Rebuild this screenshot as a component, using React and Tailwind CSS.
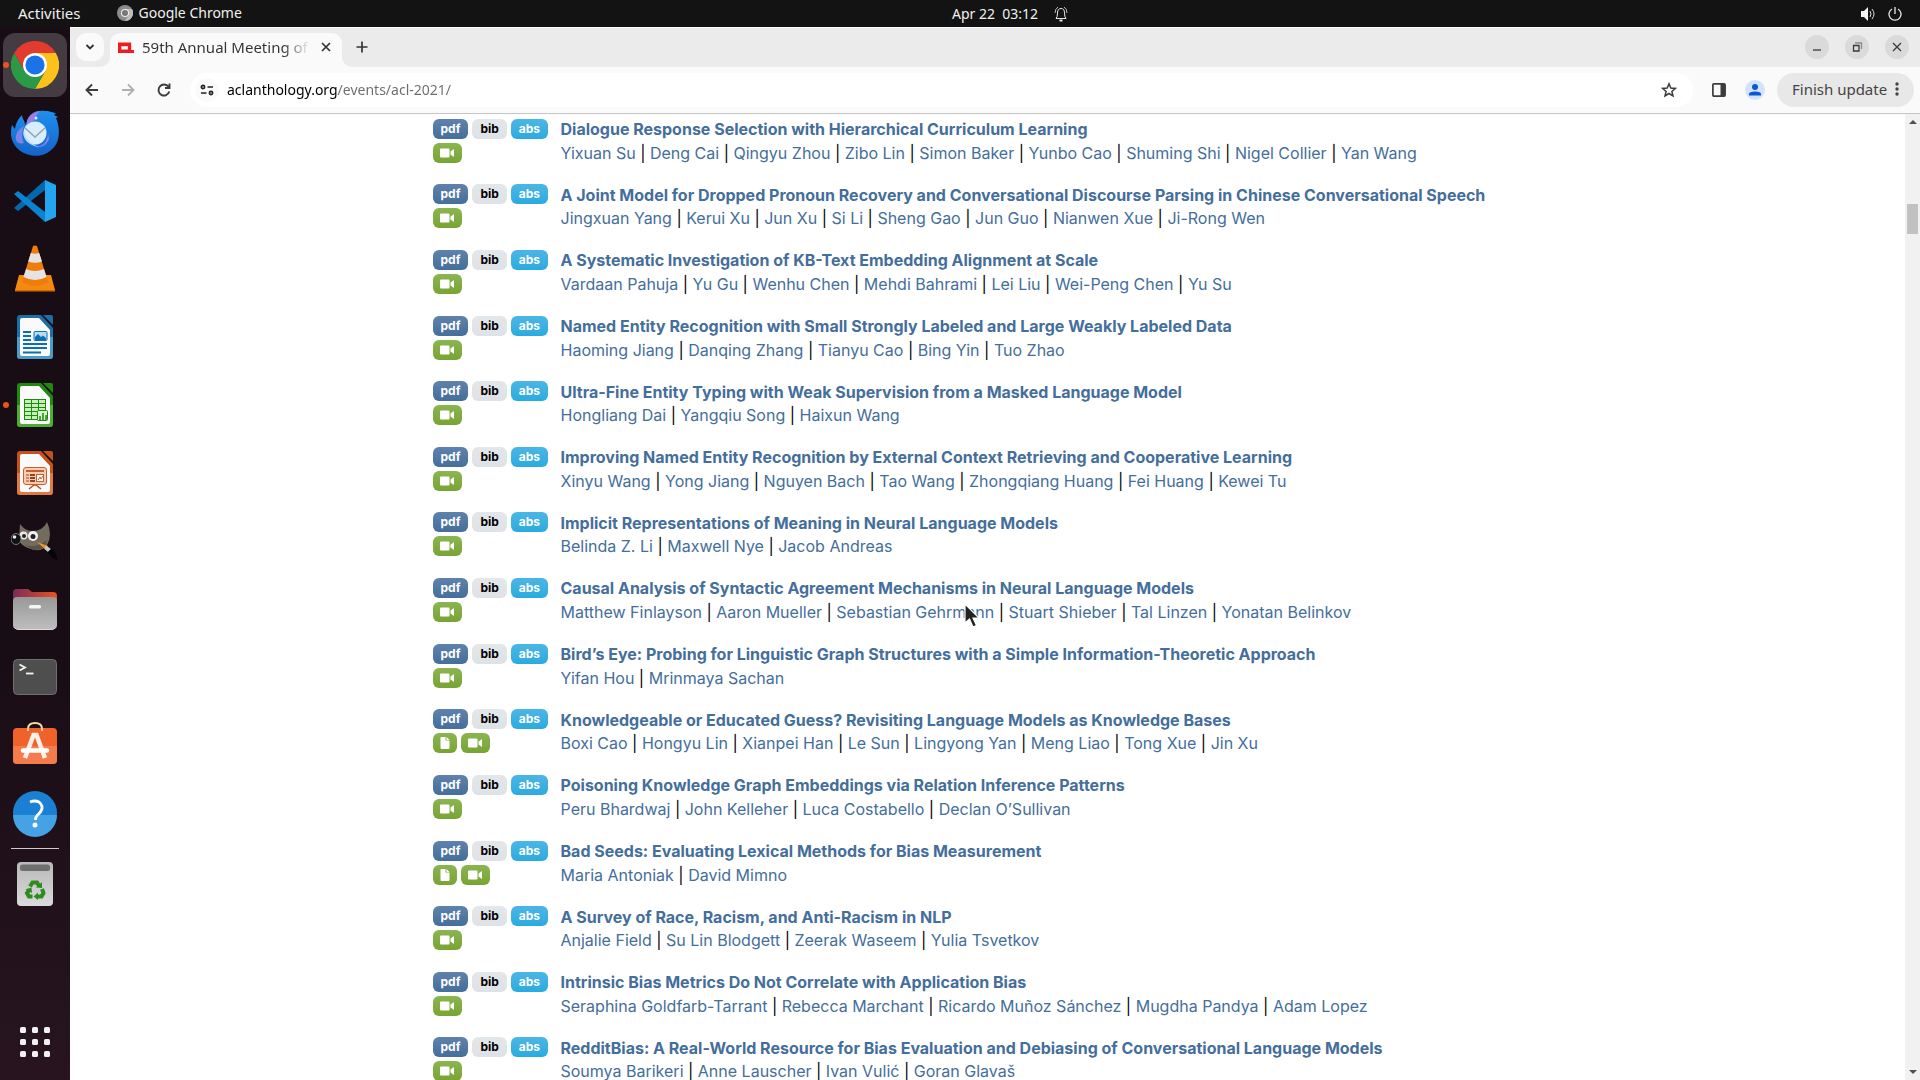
import React from "react";

const papers = [
  {
    title: "Dialogue Response Selection with Hierarchical Curriculum Learning",
    authors: ["Yixuan Su", "Deng Cai", "Qingyu Zhou", "Zibo Lin", "Simon Baker", "Yunbo Cao", "Shuming Shi", "Nigel Collier", "Yan Wang"],
  },
  {
    title: "A Joint Model for Dropped Pronoun Recovery and Conversational Discourse Parsing in Chinese Conversational Speech",
    authors: ["Jingxuan Yang", "Kerui Xu", "Jun Xu", "Si Li", "Sheng Gao", "Jun Guo", "Nianwen Xue", "Ji-Rong Wen"],
  },
  {
    title: "A Systematic Investigation of KB-Text Embedding Alignment at Scale",
    authors: ["Vardaan Pahuja", "Yu Gu", "Wenhu Chen", "Mehdi Bahrami", "Lei Liu", "Wei-Peng Chen", "Yu Su"],
  },
  {
    title: "Named Entity Recognition with Small Strongly Labeled and Large Weakly Labeled Data",
    authors: ["Haoming Jiang", "Danqing Zhang", "Tianyu Cao", "Bing Yin", "Tuo Zhao"],
  },
  {
    title: "Ultra-Fine Entity Typing with Weak Supervision from a Masked Language Model",
    authors: ["Hongliang Dai", "Yangqiu Song", "Haixun Wang"],
  },
  {
    title: "Improving Named Entity Recognition by External Context Retrieving and Cooperative Learning",
    authors: ["Xinyu Wang", "Yong Jiang", "Nguyen Bach", "Tao Wang", "Zhongqiang Huang", "Fei Huang", "Kewei Tu"],
  },
  {
    title: "Implicit Representations of Meaning in Neural Language Models",
    authors: ["Belinda Z. Li", "Maxwell Nye", "Jacob Andreas"],
  },
  {
    title: "Causal Analysis of Syntactic Agreement Mechanisms in Neural Language Models",
    authors: ["Matthew Finlayson", "Aaron Mueller", "Sebastian Gehrmann", "Stuart Shieber", "Tal Linzen", "Yonatan Belinkov"],
  },
  {
    title: "Bird’s Eye: Probing for Linguistic Graph Structures with a Simple Information-Theoretic Approach",
    authors: ["Yifan Hou", "Mrinmaya Sachan"],
  },
  {
    title: "Knowledgeable or Educated Guess? Revisiting Language Models as Knowledge Bases",
    authors: ["Boxi Cao", "Hongyu Lin", "Xianpei Han", "Le Sun", "Lingyong Yan", "Meng Liao", "Tong Xue", "Jin Xu"],
    attachment: true,
  },
  {
    title: "Poisoning Knowledge Graph Embeddings via Relation Inference Patterns",
    authors: ["Peru Bhardwaj", "John Kelleher", "Luca Costabello", "Declan O’Sullivan"],
  },
  {
    title: "Bad Seeds: Evaluating Lexical Methods for Bias Measurement",
    authors: ["Maria Antoniak", "David Mimno"],
    attachment: true,
  },
  {
    title: "A Survey of Race, Racism, and Anti-Racism in NLP",
    authors: ["Anjalie Field", "Su Lin Blodgett", "Zeerak Waseem", "Yulia Tsvetkov"],
  },
  {
    title: "Intrinsic Bias Metrics Do Not Correlate with Application Bias",
    authors: ["Seraphina Goldfarb-Tarrant", "Rebecca Marchant", "Ricardo Muñoz Sánchez", "Mugdha Pandya", "Adam Lopez"],
  },
  {
    title: "RedditBias: A Real-World Resource for Bias Evaluation and Debiasing of Conversational Language Models",
    authors: ["Soumya Barikeri", "Anne Lauscher", "Ivan Vulić", "Goran Glavaš"],
  },
];

const ChromeIcon = () => (
  <svg viewBox="0 0 48 48" className="size-12">
    <path d="M24 12 H44.8 A24 24 0 0 1 24 48 L34.4 30 Z" fill="#fcc21b" />
    <path d="M34.4 30 L24 48 A24 24 0 0 1 3.2 12 L13.6 30 Z" fill="#2b9a47" />
    <path d="M13.6 30 L3.2 12 A24 24 0 0 1 44.8 12 H24 Z" fill="#e33b2e" />
    <circle cx="24" cy="24" r="12" fill="#fff" />
    <circle cx="24" cy="24" r="9.6" fill="#1a73e8" />
  </svg>
);

const ThunderbirdIcon = () => (
  <svg viewBox="0 0 48 48" className="size-12">
    <defs>
      <linearGradient id="tb" x1="0" y1="0" x2="0" y2="1">
        <stop offset="0" stopColor="#1f8ff0" />
        <stop offset="1" stopColor="#1463c9" />
      </linearGradient>
    </defs>
    <path d="M16 12 C18 4 26 1 34 2 C40 2 42 4 45 4 L43 6 L47 8 L45 9 C49 18 49 30 44 37 C38 45 29 48 21 46.500 C9 45 1 36 0 26 C0 22 0 20 1 16 L4 20 C5 13 8 9 11 6 C11 10 14 11 14 16 Z" fill="url(#tb)" />
    <path d="M5 31 C4 24 8 20 13 17 C11 22 10 28 13 34 C9 35 6 34 5 31Z" fill="#7f83e8" />
    <path d="M16 12 C18 7 22 3 29 2 C26 5 24 8 24 11 L16 15Z" fill="#9b7bea" />
    <path d="M38 30 C36 36 30 39 25 38 C34 37 37 30 37 24Z" fill="#8b83ea" />
    <circle cx="24" cy="24" r="11.500" fill="#d9edfc" />
    <path d="M13 22 C14 28 18 34 28 38 C20 37 13 32 12.500 25Z" fill="#b9dcf8" />
    <path d="M14 19 L24 28 L34 19" fill="none" stroke="#8fa6bd" strokeWidth="1.500" />
    <circle cx="25" cy="9" r="1.500" fill="#d8f0ff" />
  </svg>
);

const VsCodeIcon = () => (
  <svg viewBox="0 0 48 48" className="size-12">
    <path d="M3 31 L7 34 L34 13 V3 Z" fill="#0468ae" />
    <path d="M3 17 L7 14 L34 35 V45 Z" fill="#0b84d0" />
    <path d="M34 3 L45 8 V40 L34 45 Z" fill="#25a5f0" />
  </svg>
);

const VlcIcon = () => (
  <svg viewBox="0 0 48 48" className="size-12">
    <path d="M8 30 H40 L44 45 H4 Z" fill="#f58a10" />
    <path d="M4 45 H44 V46.500 H4Z" fill="#d46a00" />
    <path d="M22 1 Q24 0 26 1 L37 37 Q24 45 11 37 Z" fill="#f07c0c" />
    <path d="M19.800 8 Q24 9.500 28.200 8 L31 16.500 Q24 19 17.200 16.500 Z" fill="#e4e4e4" />
    <path d="M15 24 Q24 28 33 24 L35.500 32 Q24 38 12.500 32 Z" fill="#e4e4e4" />
  </svg>
);

const OfficeIcon = ({ dark, light, children }) => (
  <svg viewBox="0 0 48 48" className="size-12">
    <path d="M9 2 H30 L42 15 V43 Q42 46 39 46 H9 Q6 46 6 43 V5 Q6 2 9 2Z" fill={dark} />
    <path d="M6 24 H42 V43 Q42 46 39 46 H9 Q6 46 6 43Z" fill={light} />
    <path d="M11 5 H28 L39 17 V41 Q39 43 37 43 H11 Q9 43 9 41 V7 Q9 5 11 5Z" fill="#fafafa" />
    <path d="M32 2 H40 Q42 2 42 4 V12 Z" fill={dark} />
    {children}
  </svg>
);

const WriterIcon = () => (
  <OfficeIcon dark="#1c6ea6" light="#4a9ccb">
    <path d="M12 19 H20 M12 23 H20 M12 27 H20 M12 31 H36 M12 35 H36 M12 39.500 H30" stroke="#0b6fb5" strokeWidth="2" />
    <rect x="23" y="18.500" width="13" height="9" rx="1" fill="#b9dcf2" stroke="#0b6fb5" />
    <path d="M24 27 V24 L27 21 L30 24 L32 22.500 L35 25 V27Z" fill="#0b6fb5" />
  </OfficeIcon>
);

const CalcIcon = () => (
  <OfficeIcon dark="#218a0e" light="#4eae32">
    <rect x="13.500" y="18.500" width="21" height="20" fill="#c9efb9" stroke="#1c8a0c" />
    <path d="M13 22.500 H35 M13 26.500 H35 M13 30.500 H35 M13 34.500 H35 M20.500 18 V39 M27.500 18 V39" stroke="#1c8a0c" />
    <rect x="26.500" y="29.500" width="10" height="10" rx="1" fill="#d7f5ca" stroke="#1c8a0c" />
    <path d="M29 39 V35 M32 39 V32 M35 39 V34" stroke="#1c8a0c" strokeWidth="1.500" />
  </OfficeIcon>
);

const ImpressIcon = () => (
  <OfficeIcon dark="#c4521a" light="#e07a41">
    <path d="M18 40 L23 36 H25 L30 40" fill="none" stroke="#b8501c" strokeWidth="1.500" />
    <rect x="12.500" y="18.500" width="23" height="17" rx="2.500" fill="#f6cdb4" stroke="#c4622e" />
    <path d="M15 22 H33" stroke="#c4622e" strokeWidth="2" />
    <path d="M15 26 H18 M15 29 H18 M15 32 H18" stroke="#d98858" strokeWidth="2" />
    <path d="M19 26 H24 M19 29 H24 M19 32 H24" stroke="#99411a" strokeWidth="2" />
    <rect x="25.500" y="25.500" width="7" height="7" fill="#fff" stroke="#c4622e" />
    <path d="M27 31 L29 28 L30 30 L32 27" fill="none" stroke="#c4622e" />
  </OfficeIcon>
);

const GimpIcon = () => (
  <svg viewBox="0 -4 48 48" className="size-12">
    <path d="M9 3 Q14 10 21 10 Q32 10 36 1 Q42 14 36 24 Q30 32 20 28 Q12 26 8 20 Z" fill="#736c5e" />
    <path d="M14 24 Q25 28 36 19 L34 25 Q28 31 20 28Z" fill="#5a5448" />
    <circle cx="12.500" cy="14.500" r="4" fill="#e8e8e8" />
    <circle cx="22" cy="15" r="5" fill="#f2f2f2" />
    <circle cx="13" cy="15" r="2" fill="#222" />
    <circle cx="22" cy="15.500" r="2.500" fill="#222" />
    <ellipse cx="5" cy="18" rx="5" ry="5.500" fill="#111" stroke="#6d7a80" />
    <circle cx="3.500" cy="16" r="1.800" fill="#eee" />
    <path d="M26 21 L37 25 L35 29 Z" fill="#f0962a" />
    <path d="M35 24.500 L40 28 L37 31 L33.500 28Z" fill="#c9c9c9" />
    <path d="M40 28 Q46 31 46.500 39 Q39 36 37 31Z" fill="#050505" />
  </svg>
);

const FilesIcon = () => (
  <svg viewBox="0 0 48 48" className="size-12">
    <defs>
      <linearGradient id="folderBack">
        <stop offset="0" stopColor="#7c2a5c" />
        <stop offset="1" stopColor="#e9541f" />
      </linearGradient>
      <linearGradient id="folderFront" x1="0" y1="0" x2="0" y2="1">
        <stop offset="0" stopColor="#989898" />
        <stop offset="1" stopColor="#bdbdbd" />
      </linearGradient>
    </defs>
    <path d="M2 8 Q2 4 6 4 H17 L21 7 H42 Q46 7 46 11 V24 H2Z" fill="url(#folderBack)" />
    <rect x="2" y="12" width="44" height="32" rx="4" fill="url(#folderFront)" />
    <path d="M4 43 Q5 44.500 7 44.500 H41 Q43 44.500 44 43" fill="none" stroke="#dadada" />
    <rect x="18" y="20" width="12" height="3.500" rx="1.500" fill="#f5f5f5" />
  </svg>
);

const TerminalIcon = () => (
  <svg viewBox="0 0 48 48" className="size-12">
    <rect x="2.500" y="6.500" width="43" height="35" rx="4" fill="#4e4e4e" stroke="#707070" />
    <path d="M8.500 11.500 L14 14.500 L8.500 17.500" fill="none" stroke="#f4f4f4" strokeWidth="1.800" />
    <path d="M15 20.500 H22.500" stroke="#f4f4f4" strokeWidth="1.800" />
  </svg>
);

const SoftwareIcon = () => (
  <svg viewBox="0 0 48 48" className="size-12">
    <rect x="2" y="7" width="44" height="36" rx="4" fill="#f1622a" />
    <path d="M2 25 H46 V39 Q46 43 42 43 H6 Q2 43 2 39Z" fill="#f47b4c" />
    <path d="M17 10 V8 Q17 2 24 2 Q31 2 31 8 V10" fill="none" stroke="#f7d9a9" strokeWidth="2" />
    <path d="M14 37 L22.500 14 H25.500 L34 37" fill="none" stroke="#fdf0e8" strokeWidth="4.500" />
    <path d="M12 29.500 H36" stroke="#fff" strokeWidth="4.500" strokeLinecap="round" />
  </svg>
);

const HelpIcon = () => (
  <svg viewBox="0 0 48 48" className="size-12">
    <circle cx="24" cy="24" r="22" fill="#1b7fd3" />
    <path d="M2 26 H46 A22 22 0 0 1 2 26Z" fill="#45a3e5" />
    <path d="M19 13 Q24 11 28 13 Q33 17 30 22 Q29 24 26.500 26 Q24.500 28 24.500 31" fill="none" stroke="#fff" strokeWidth="2.800" />
    <circle cx="24" cy="36" r="2.500" fill="#fff" />
  </svg>
);

const TrashIcon = () => (
  <svg viewBox="0 0 48 48" className="size-12">
    <defs>
      <linearGradient id="bin" x1="0" y1="0" x2="0" y2="1">
        <stop offset="0" stopColor="#b9b9b9" />
        <stop offset="1" stopColor="#dadada" />
      </linearGradient>
    </defs>
    <rect x="6" y="2" width="36" height="44" rx="4" fill="url(#bin)" />
    <rect x="9" y="4.500" width="30" height="6.500" rx="2.500" fill="#6f6f6f" />
    <g fill="none" stroke="#2e8b1e" strokeWidth="4">
      <path d="M19 26.500 L21.500 22.500 H26 L28 26" />
      <path d="M31 29 L32.500 33 L30.500 36.500 H25" />
      <path d="M21.500 36.500 H18 L16 33 L18.500 29.500" />
    </g>
    <path d="M25 27.500 L31 28 L31 22Z M27 32.500 L22.500 36.500 L27 40Z M14.500 29.500 L20.500 27.500 L21 33Z" fill="#2e8b1e" />
  </svg>
);

const dockApps = [
  { name: "Thunderbird", Icon: ThunderbirdIcon },
  { name: "Visual Studio Code", Icon: VsCodeIcon },
  { name: "VLC", Icon: VlcIcon },
  { name: "Writer", Icon: WriterIcon },
  { name: "Calc", Icon: CalcIcon, running: true },
  { name: "Impress", Icon: ImpressIcon },
  { name: "GIMP", Icon: GimpIcon },
  { name: "Files", Icon: FilesIcon },
  { name: "Terminal", Icon: TerminalIcon },
  { name: "Software", Icon: SoftwareIcon },
  { name: "Help", Icon: HelpIcon },
];

const DockButton = ({ name, Icon, running, active }) => (
  <button
    aria-label={name}
    className={`relative flex size-16 items-center justify-center rounded-xl ${active ? "bg-[#453b42]" : ""}`}
  >
    {running && <span className="absolute left-0 size-1.5 rounded-full bg-[#e95420]" />}
    <Icon />
  </button>
);

const Dock = () => (
  <nav className="flex w-[70px] shrink-0 flex-col items-center gap-1 bg-linear-to-b from-[#190d15] from-60% to-[#27141f] pt-1.5">
    <DockButton name="Google Chrome" Icon={ChromeIcon} running active />
    {dockApps.map((app) => (
      <DockButton key={app.name} {...app} />
    ))}
    <hr className="-mt-px -mb-px w-12 border-[#cfcbcd]" />
    <DockButton name="Trash" Icon={TrashIcon} />
    <button aria-label="Show Applications" className="mt-auto mb-1.5 flex size-16 items-center justify-center">
      <svg viewBox="0 0 30 32" className="h-8 w-[30px]" fill="#f2f0f0">
        {[0, 12, 24].map((x) => [1, 13, 25].map((y) => <rect key={`${x}-${y}`} x={x} y={y} width="6" height="6" rx="1.500" />))}
      </svg>
    </button>
  </nav>
);

const TopBar = () => (
  <header className="grid h-[27px] shrink-0 grid-cols-3 items-center bg-[#131313] text-sm text-[#f0f0f0]">
    <div className="flex items-center pl-[18px]">
      <button className="text-[15px]">Activities</button>
      <button className="ml-9 flex items-center gap-1.5">
        <svg viewBox="0 0 16 16" className="size-4">
          <circle cx="8" cy="8" r="8" fill="#8c8c8c" />
          <path d="M8 16 A8 8 0 0 0 15 4 H8 L11.500 10Z" fill="#bdbdbd" />
          <circle cx="8" cy="8" r="4" fill="#eee" />
          <circle cx="8" cy="8" r="3" fill="#777" />
        </svg>
        Google Chrome
      </button>
    </div>
    <div className="flex items-center justify-center gap-4 pl-[100px]">
      <button className="whitespace-pre">Apr 22  03:12</button>
      <svg viewBox="0 0 14 16" className="h-4 w-3.5" fill="none" stroke="#e6e6e6">
        <path d="M2 12.500 Q3.500 11 3.500 7 Q3.500 2.500 7 2.500 Q10.500 2.500 10.500 7 Q10.500 11 12 12.500 Z" />
        <path d="M1 7 Q1 3 4 1 M13 7 Q13 3 10 1" strokeWidth="0.800" />
        <path d="M5.500 14.500 H8.500" strokeWidth="2" />
      </svg>
    </div>
    <div className="flex items-center justify-end gap-3 pr-[18px]">
      <svg viewBox="0 0 16 16" className="size-4">
        <path d="M1 5 H4 L8 1 V15 L4 11 H1Z" fill="#f2f2f2" />
        <path d="M10 5 Q12 8 10 11 M12 3 Q16 8 12 13" fill="none" stroke="#e0e0e0" />
      </svg>
      <svg viewBox="0 0 14 14" className="size-3.5" fill="none" stroke="#e8e8e8" strokeWidth="1.300">
        <path d="M4 2 A6 6 0 1 0 10 2 M7 0 V7" />
      </svg>
    </div>
  </header>
);

const WindowButton = ({ label, children }) => (
  <button aria-label={label} className="flex size-6 items-center justify-center rounded-full bg-[#dadada]">
    <svg viewBox="0 0 12 12" className="size-3" fill="none" stroke="#3a3a3a" strokeWidth="1.300">
      {children}
    </svg>
  </button>
);

const TabStrip = () => (
  <div className="flex h-10 shrink-0 items-end border-t border-white bg-[#ebebeb]">
    <button aria-label="Search tabs" className="ml-1.5 mb-1.5 flex size-7 items-center justify-center rounded-[10px] bg-[#fafafa]">
      <svg viewBox="0 0 10 10" className="size-2.5" fill="none" stroke="#333" strokeWidth="1.800">
        <path d="M1.500 3 L5 6.500 L8.500 3" />
      </svg>
    </button>
    <div className="flex items-end">
      <svg viewBox="0 0 10 10" className="-ml-1 size-2.5" fill="#fafafa">
        <path d="M10 0 V10 H0 A10 10 0 0 0 10 0Z" />
      </svg>
      <div className="flex h-[34px] w-[232px] items-center rounded-t-[10px] bg-[#fafafa] pb-1.5 pr-2 pl-2">
        <svg viewBox="0 0 68 46" className="h-[11px] w-4 shrink-0">
          <path d="M0 2 H56 V34 H68 V46 H0 Z M14 18 V32 H42 V18 Z" fill="#ed1c24" fillRule="evenodd" />
        </svg>
        <span className="ml-2 w-[168px] overflow-hidden whitespace-nowrap bg-linear-to-r from-[#333] from-84% to-[#33333300] to-100% bg-clip-text text-[15px] leading-5 text-transparent">
          59th Annual Meeting of the
        </span>
        <button aria-label="Close tab" className="ml-auto flex size-4 items-center justify-center">
          <svg viewBox="0 0 10 10" className="size-2.5" stroke="#333" strokeWidth="1.700">
            <path d="M1 1 L9 9 M9 1 L1 9" />
          </svg>
        </button>
      </div>
      <svg viewBox="0 0 10 10" className="size-2.5" fill="#fafafa">
        <path d="M0 0 V10 H10 A10 10 0 0 1 0 0Z" />
      </svg>
    </div>
    <button aria-label="New tab" className="mb-1.5 flex h-7 w-5 items-center justify-center">
      <svg viewBox="0 0 12 12" className="size-3 shrink-0" stroke="#333" strokeWidth="1.700">
        <path d="M6 0.500 V11.500 M0.500 6 H11.500" />
      </svg>
    </button>
    <div className="ml-auto mr-[11px] mb-2 flex gap-4">
      <WindowButton label="Minimize">
        <path d="M2 9 H10" />
      </WindowButton>
      <WindowButton label="Restore">
        <path d="M2.500 4.500 H8 V10 H2.500Z" />
        <path d="M4 2 H10.500 V8" stroke="#8a8a8a" />
      </WindowButton>
      <WindowButton label="Close">
        <path d="M2 2 L10 10 M10 2 L2 10" />
      </WindowButton>
    </div>
  </div>
);

const NavButton = ({ label, color, children }) => (
  <button aria-label={label} className="flex size-9 items-center justify-center">
    <svg viewBox="0 0 16 16" className="size-4" fill="none" stroke={color} strokeWidth="1.900">
      {children}
    </svg>
  </button>
);

const Toolbar = () => (
  <div className="flex h-[47px] shrink-0 items-center border-b border-[#c6c6c6] bg-[#fafafa] pr-1.5 pl-1">
    <NavButton label="Back" color="#3c3c3c">
      <path d="M14 8 H3 M8 2.500 L2.500 8 L8 13.500" />
    </NavButton>
    <NavButton label="Forward" color="#b0b0b0">
      <path d="M2 8 H13 M8 2.500 L13.500 8 L8 13.500" />
    </NavButton>
    <NavButton label="Reload" color="#3c3c3c">
      <path d="M13.300 9.500 A5.500 5.500 0 1 1 12.500 4.800 M13.500 1.500 V6 H9" />
    </NavButton>
    <div className="ml-2 flex h-[34px] flex-1 items-center rounded-full bg-white pr-4 pl-[5px]">
      <button aria-label="Site information" className="flex size-6 items-center justify-center rounded-full bg-[#fafafa]">
        <svg viewBox="0 0 14 12" className="h-3 w-3.5" fill="none" stroke="#222" strokeWidth="1.700">
          <circle cx="3" cy="3" r="1.600" />
          <path d="M7.500 3 H13 M1 9 H6.500" />
          <circle cx="11" cy="9" r="1.600" />
        </svg>
      </button>
      {/* host part black, path grey */}
      <input
        aria-label="Address"
        defaultValue="aclanthology.org/events/acl-2021/"
        className="ml-2 flex-1 bg-[linear-gradient(to_right,#000_111px,#6b6b6b_111px)] bg-clip-text text-sm text-transparent outline-none"
      />
      <button aria-label="Bookmark this tab">
        <svg viewBox="0 0 16 16" className="size-4" fill="none" stroke="#3c3c3c" strokeWidth="1.500">
          <path d="M8 1.800 L9.800 6 L14.400 6.400 L10.900 9.400 L12 14 L8 11.500 L4 14 L5.100 9.400 L1.600 6.400 L6.200 6 Z" />
        </svg>
      </button>
    </div>
    <button aria-label="Side panel" className="ml-2 flex size-9 items-center justify-center">
      <svg viewBox="0 0 14 14" className="size-3.5">
        <rect x="0.900" y="0.900" width="12.200" height="12.200" rx="1" fill="none" stroke="#3c3c3c" strokeWidth="1.700" />
        <path d="M8.500 1 H13 V13 H8.500Z" fill="#3c3c3c" />
      </svg>
    </button>
    <button aria-label="Profile" className="mr-1 flex size-9 items-center justify-center">
      <svg viewBox="0 0 20 20" className="size-5">
        <circle cx="10" cy="10" r="10" fill="#d3e3fd" />
        <circle cx="10" cy="7" r="3" fill="#0b57d0" />
        <path d="M4 15.500 V14 Q4 11.500 10 11.500 Q16 11.500 16 14 V15.500Z" fill="#0b57d0" />
      </svg>
    </button>
    <button className="flex h-[34px] w-[137px] items-center justify-between rounded-full bg-[#e8e8e8] px-[15px] pb-0.5 text-[15px] text-[#444]">
      Finish update
      <svg viewBox="0 0 4 14" className="h-3.5 w-1" fill="#444">
        <circle cx="2" cy="2" r="1.700" />
        <circle cx="2" cy="7" r="1.700" />
        <circle cx="2" cy="12" r="1.700" />
      </svg>
    </button>
  </div>
);

const badge = "inline-block mr-1 rounded-md py-1 align-middle text-xs leading-none font-bold";
const greenBadge = `${badge} px-[7px] bg-linear-to-b from-[#8bb550] to-[#78a433]`;

const Paper = ({ title, authors, attachment }) => (
  <li className="mb-4 flex">
    <div className="mr-2 w-30 shrink-0 whitespace-nowrap">
      <a href="#pdf" className={`${badge} px-2 bg-linear-to-b from-[#5f82ad] to-[#446e9b] text-white`}>pdf</a>
      <a href="#bib" className={`${badge} px-2 bg-linear-to-b from-[#e4e7ea] to-[#dee2e6] text-black`}>bib</a>
      <a href="#abs" className={`${badge} px-2 bg-linear-to-b from-[#4bb6e5] to-[#29abe0] text-white`}>abs</a>
      <br />
      {attachment && (
        <a href="#attachment" aria-label="Attachment" className={greenBadge}>
          <svg viewBox="0 0 10 12" className="h-3 w-2.5">
            <path d="M1 0 H5.500 V3.500 H9.500 V11 Q9.500 12 8.500 12 H1.500 Q0.500 12 0.500 11 V0.500Z M6.500 0 L9.500 3 H6.500Z" fill="#fff" />
          </svg>
        </a>
      )}
      <a href="#video" aria-label="Video" className={greenBadge}>
        <svg viewBox="0 0 15 12" className="h-3 w-[15px]">
          <path d="M1 1.500 H8.500 Q9.500 1.500 9.500 2.500 V9.500 Q9.500 10.500 8.500 10.500 H1 Q0 10.500 0 9.500 V2.500 Q0 1.500 1 1.500Z M10.500 4.500 L14 2 V10 L10.500 7.500Z" fill="#fff" />
        </svg>
      </a>
    </div>
    <div>
      <strong className="font-bold">
        <a href="#paper" className="align-middle text-[#446e9b]">{title}</a>
      </strong>
      <br />
      {authors.map((author, i) => (
        <React.Fragment key={author}>
          {i > 0 && " | "}
          <a href="#author" className="text-[#446e9b]">{author}</a>
        </React.Fragment>
      ))}
    </div>
  </li>
);

const Scrollbar = () => (
  <div className="flex w-[15px] shrink-0 flex-col items-center justify-between bg-[#f1f1f1] py-1.5">
    <div className="flex flex-col items-center">
      <svg viewBox="0 0 8 4" className="h-1 w-2" fill="#505050"><path d="M0 4 L4 0 L8 4Z" /></svg>
      <div className="mt-20 h-[30px] w-[11px] bg-[#c1c1c1]" />
    </div>
    <svg viewBox="0 0 8 4" className="h-1 w-2" fill="#505050"><path d="M0 0 L4 4 L8 0Z" /></svg>
  </div>
);

export default function App() {
  return (
    <div className="relative flex h-screen flex-col overflow-hidden bg-white font-['Noto_Sans',sans-serif]">
      <TopBar />
      <div className="flex min-h-0 flex-1">
        <Dock />
        <div className="flex min-w-0 flex-1 flex-col">
          <TabStrip />
          <Toolbar />
          <div className="flex min-h-0 flex-1">
            <main className="min-w-0 flex-1 overflow-hidden">
              <ul className="mx-auto max-w-[1140px] px-[15px] pt-px font-[Inter,sans-serif] text-base leading-6 text-black">
                {papers.map((paper) => (
                  <Paper key={paper.title} {...paper} />
                ))}
              </ul>
            </main>
            <Scrollbar />
          </div>
        </div>
      </div>
      <svg viewBox="0 0 16 26" className="absolute top-[603px] left-[964px] h-[26px] w-4">
        <path d="M1 1 V20 L5.500 16 L9 24 L12.500 22.500 L9 15 H15Z" fill="#222" stroke="#fff" strokeWidth="1.200" />
      </svg>
    </div>
  );
}
